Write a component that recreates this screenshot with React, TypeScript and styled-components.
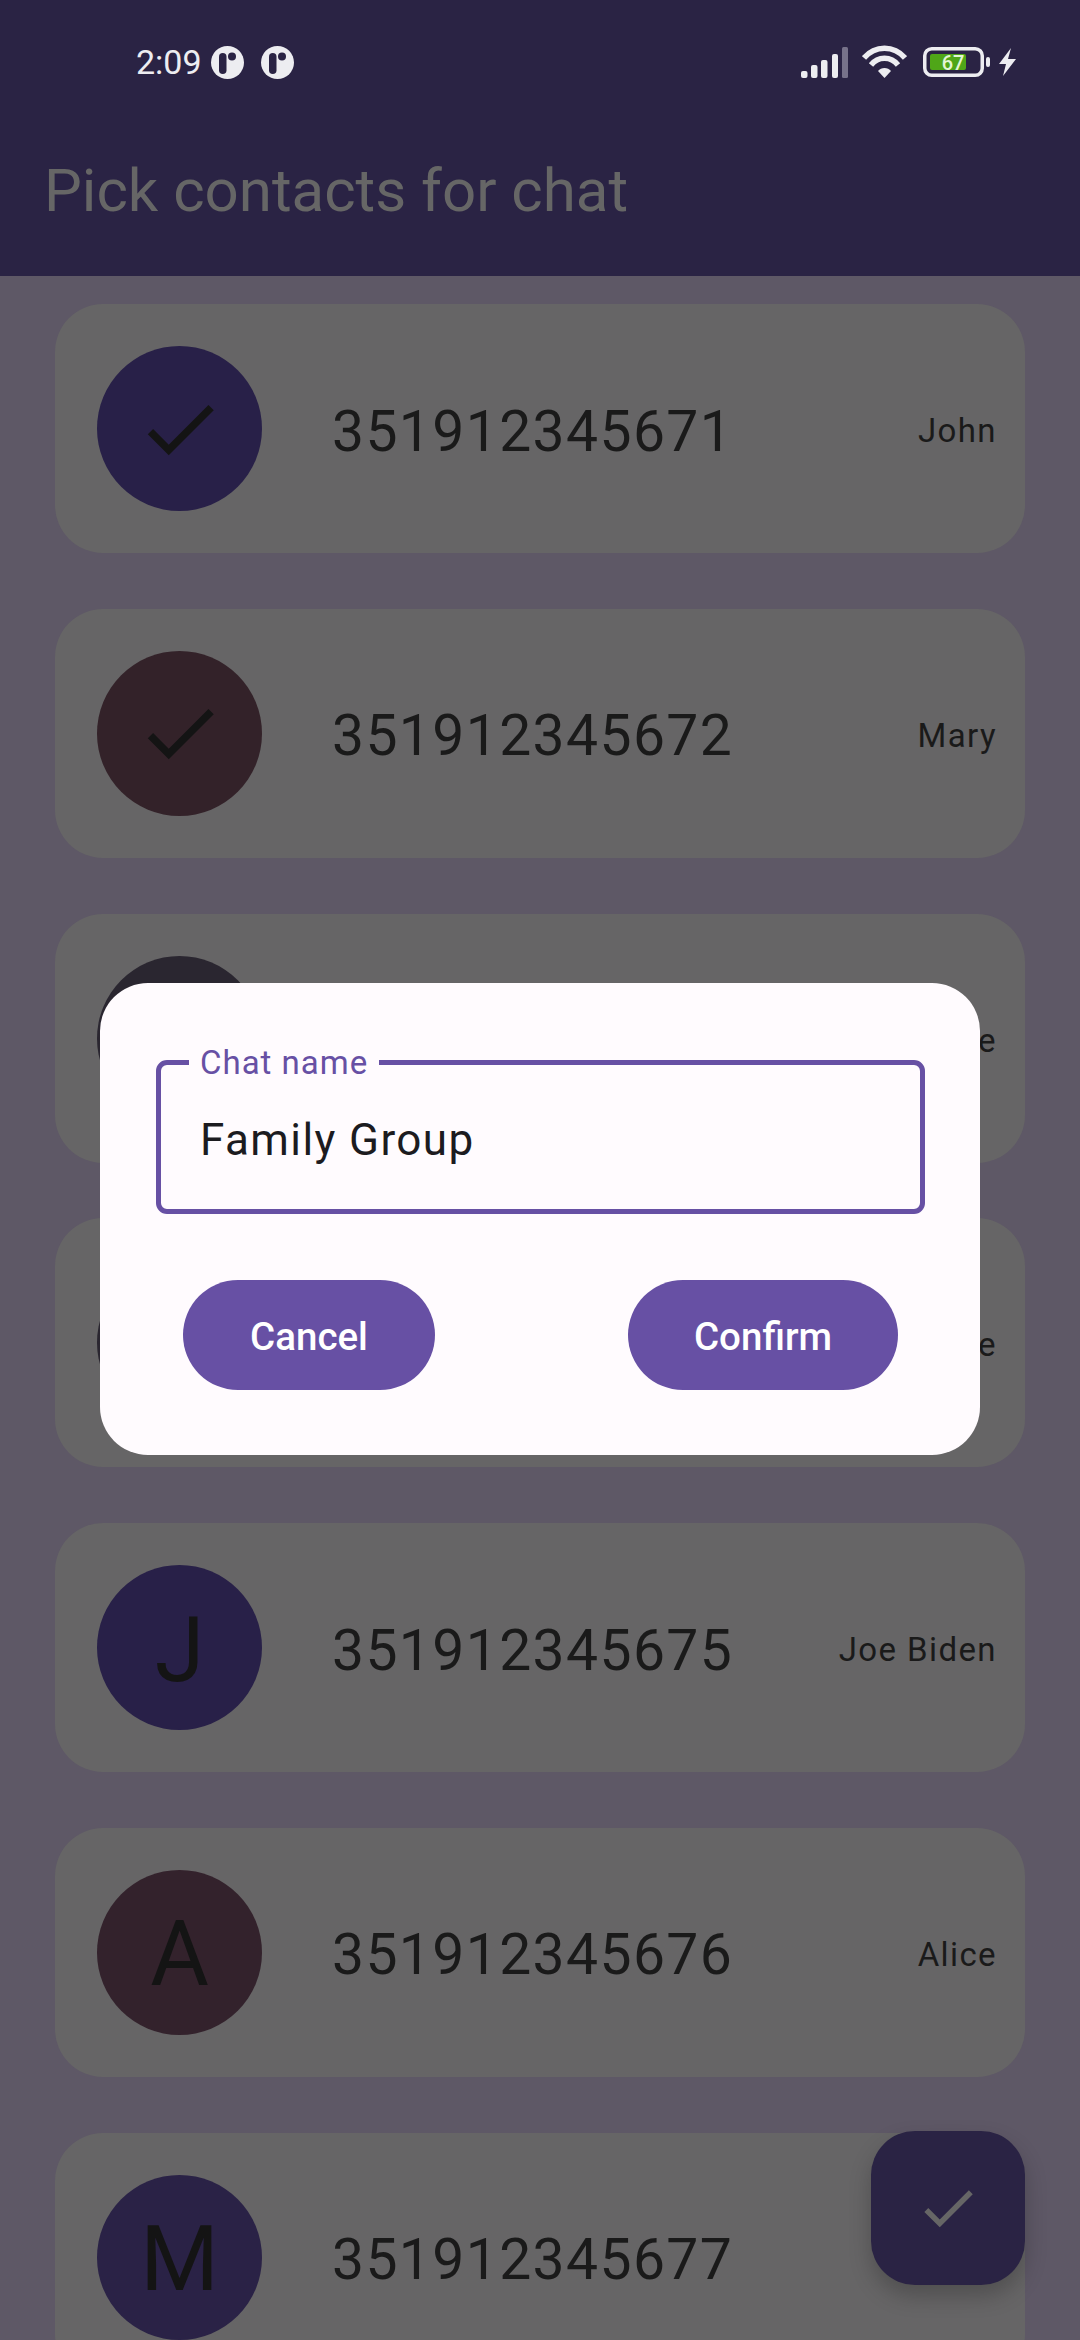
import React from "react";
import styled, { createGlobalStyle } from "styled-components";

const GlobalStyle = createGlobalStyle`
  html, body {
    margin: 0;
    padding: 0;
    background: #5e5866;
    font-family: Roboto, "Liberation Sans", sans-serif;
  }
`;

const Screen = styled.div`
  position: relative;
  width: 1080px;
  height: 2340px;
  overflow: hidden;
  background: #5e5866;
`;

const Header = styled.header`
  height: 276px;
  background: #2a2344;
  display: flex;
  flex-direction: column;
`;

const StatusBar = styled.div`
  height: 124px;
  padding: 0 63px 0 136px;
  display: flex;
  align-items: center;
  justify-content: space-between;
  color: #ededf1;
  box-sizing: border-box;
`;

const StatusLeft = styled.div`
  display: flex;
  align-items: center;
`;

const StatusRight = styled.div`
  display: flex;
  align-items: center;
`;

const Clock = styled.span`
  font-size: 34px;
  margin-right: 9px;
`;

const NotifyIcon = styled.svg`
  width: 33px;
  height: 33px;
  margin-right: 17px;
`;

const WifiIcon = styled.svg`
  width: 45px;
  height: 34px;
  margin-left: 14px;
`;

const BatteryIcon = styled.svg`
  width: 67px;
  height: 30px;
  margin-left: 16px;
`;

const BoltIcon = styled.svg`
  width: 19px;
  height: 28px;
  margin-left: 8px;
`;

const Title = styled.h1`
  margin: 0;
  padding: 27px 0 0 44px;
  font-size: 60px;
  line-height: 80px;
  font-weight: 400;
  color: #666666;
`;

const List = styled.div`
  display: flex;
  flex-direction: column;
  gap: 55.75px;
  padding: 28px 55px 0;
`;

const Card = styled.div`
  flex: none;
  height: 249px;
  border-radius: 48px;
  background: #666566;
  padding: 0 28px 0 42px;
  display: flex;
  align-items: center;
`;

const Avatar = styled.div<{ $color: string }>`
  flex: none;
  width: 165px;
  height: 165px;
  border-radius: 50%;
  background: ${(props) => props.$color};
  display: flex;
  align-items: center;
  justify-content: center;
`;

const Letter = styled.span`
  padding-top: 5px;
  font-size: 90px;
  color: #141414;
`;

const CheckIcon = styled.svg`
  width: 90px;
  height: 90px;
  fill: #141414;
`;

const Phone = styled.span`
  margin-left: 70px;
  padding-top: 5px;
  font-size: 57px;
  letter-spacing: 1.4px;
  color: #1a1a1a;
`;

const Name = styled.span`
  margin-left: auto;
  padding-top: 4px;
  font-size: 33px;
  letter-spacing: 1.4px;
  color: #1a1a1a;
`;

const Dialog = styled.div`
  position: absolute;
  left: 100px;
  top: 983px;
  width: 880px;
  height: 472px;
  box-sizing: border-box;
  border-radius: 48px;
  background: #fffbfe;
  padding: 77px 55px 0 56px;
`;

const Field = styled.div`
  position: relative;
  height: 154px;
  box-sizing: border-box;
  border: 5.5px solid #6750a4;
  border-radius: 11px;
  display: flex;
  align-items: center;
  padding: 5px 0 0 39px;
  font-size: 44px;
  letter-spacing: 1.4px;
  color: #1c1b1f;
`;

const FieldLabel = styled.label`
  position: absolute;
  left: 28px;
  top: -21px;
  padding: 0 11px;
  background: #fffbfe;
  font-size: 33px;
  line-height: 38px;
  letter-spacing: 1px;
  color: #6750a4;
`;

const Actions = styled.div`
  margin-top: 66px;
  padding: 0 27px;
  display: flex;
  justify-content: space-between;
`;

const ActionButton = styled.button<{ $width: number }>`
  width: ${(props) => props.$width}px;
  height: 110px;
  border: none;
  border-radius: 55px;
  padding: 3px 0 0;
  background: #6750a4;
  color: #ffffff;
  font-family: inherit;
  font-size: 38.5px;
  font-weight: 500;
`;

const Fab = styled.div`
  position: absolute;
  left: 871px;
  top: 2131px;
  width: 154px;
  height: 154px;
  border-radius: 44px;
  background: #2a2344;
  box-shadow: 0 11px 22px rgba(0, 0, 0, 0.22);
  display: flex;
  align-items: center;
  justify-content: center;
`;

const FabIcon = styled.svg`
  width: 66px;
  height: 66px;
  fill: #666666;
`;

const CHECK = "M9 16.17L4.83 12l-1.42 1.41L9 19 21 7l-1.41-1.41z";

type Contact = {
  phone: string;
  name: string;
  color: string;
  letter?: string;
};

const contacts: Contact[] = [
  { phone: "351912345671", name: "John", color: "#282048" },
  { phone: "351912345672", name: "Mary", color: "#332229" },
  { phone: "351912345673", name: "Jane", color: "#2a2630" },
  { phone: "351912345674", name: "Mike", color: "#2a2630" },
  { phone: "351912345675", name: "Joe Biden", color: "#282048", letter: "J" },
  { phone: "351912345676", name: "Alice", color: "#33222c", letter: "A" },
  { phone: "351912345677", name: "Mark", color: "#2a2246", letter: "M" },
];

const Notify = () => (
  <NotifyIcon viewBox="0 0 33 33">
    <circle cx="16.5" cy="16.5" r="16.5" fill="#ededf1" />
    <rect x="8" y="7" width="7.5" height="21" rx="3.75" fill="#2a2344" />
    <circle cx="21" cy="10.5" r="4" fill="#2a2344" />
  </NotifyIcon>
);

const Signal = () => (
  <svg width="47" height="31" viewBox="0 0 47 31">
    <rect x="0" y="24" width="6.5" height="7" rx="2" fill="#ededf1" />
    <rect x="10" y="18" width="6.5" height="13" rx="2" fill="#ededf1" />
    <rect x="20" y="13" width="6.5" height="18" rx="2" fill="#ededf1" />
    <rect x="31" y="7" width="6" height="24" rx="2" fill="#ededf1" />
    <rect x="41" y="0" width="6" height="31" rx="1.5" fill="#77728a" />
  </svg>
);

const Wifi = () => (
  <WifiIcon viewBox="0 0 45 34">
    <g fill="none" stroke="#ededf1" strokeWidth="5.5">
      <path d="M2 13C13 0 32 0 43 13" />
      <path d="M9 20C16 11 29 11 36 20" />
    </g>
    <path d="M16 26C19 22 26 22 29 26L22.500 33Z" fill="#ededf1" />
  </WifiIcon>
);

const Battery = () => (
  <BatteryIcon viewBox="0 0 67 30">
    <rect x="1.75" y="1.75" width="57.500" height="26.500" rx="7" fill="none" stroke="#ededf1" strokeWidth="3.500" />
    <rect x="7" y="7" width="36" height="16" rx="2" fill="#4fa618" />
    <rect x="63" y="10" width="4" height="10" rx="2" fill="#ededf1" />
    <text x="30" y="23" textAnchor="middle" fontSize="20" fontWeight="500" fontFamily="Roboto" fill="#e3f5d5">
      67
    </text>
  </BatteryIcon>
);

const Bolt = () => (
  <BoltIcon viewBox="0 0 19 28">
    <path d="M13 0L1 16H8L5 28L18 11H10Z" fill="#ededf1" />
  </BoltIcon>
);

export default function App() {
  return (
    <Screen>
      <GlobalStyle />
      <Header>
        <StatusBar>
          <StatusLeft>
            <Clock>2:09</Clock>
            <Notify />
            <Notify />
          </StatusLeft>
          <StatusRight>
            <Signal />
            <Wifi />
            <Battery />
            <Bolt />
          </StatusRight>
        </StatusBar>
        <Title>Pick contacts for chat</Title>
      </Header>
      <List>
        {contacts.map((contact) => (
          <Card key={contact.phone}>
            <Avatar $color={contact.color}>
              {contact.letter ? (
                <Letter>{contact.letter}</Letter>
              ) : (
                <CheckIcon viewBox="0 0 24 24">
                  <path d={CHECK} />
                </CheckIcon>
              )}
            </Avatar>
            <Phone>{contact.phone}</Phone>
            <Name>{contact.name}</Name>
          </Card>
        ))}
      </List>
      <Fab>
        <FabIcon viewBox="0 0 24 24">
          <path d={CHECK} />
        </FabIcon>
      </Fab>
      <Dialog>
        <Field>
          <FieldLabel>Chat name</FieldLabel>
          Family Group
        </Field>
        <Actions>
          <ActionButton $width={252}>Cancel</ActionButton>
          <ActionButton $width={270}>Confirm</ActionButton>
        </Actions>
      </Dialog>
    </Screen>
  );
}
